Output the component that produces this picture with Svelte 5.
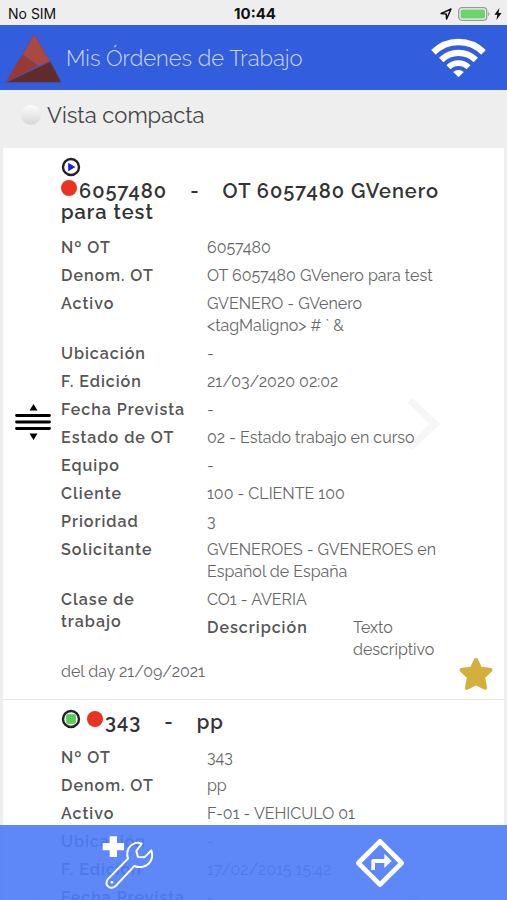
<script lang="ts">
	type Row = { label: string; value: string; nested?: { label: string; value: string } };
	type Order = {
		id: string;
		title: string;
		state: 'running' | 'stopped';
		rows: Row[];
		note: string;
		starred: boolean;
	};

	let compact = $state(false);

	const orders: Order[] = [
		{
			id: '6057480',
			title: 'OT 6057480 GVenero para test',
			state: 'running',
			rows: [
				{ label: 'Nº OT', value: '6057480' },
				{ label: 'Denom. OT', value: 'OT 6057480 GVenero para test' },
				{ label: 'Activo', value: 'GVENERO - GVenero <tagMaligno> # ` &' },
				{ label: 'Ubicación', value: '-' },
				{ label: 'F. Edición', value: '21/03/2020 02:02' },
				{ label: 'Fecha Prevista', value: '-' },
				{ label: 'Estado de OT', value: '02 - Estado trabajo en curso' },
				{ label: 'Equipo', value: '-' },
				{ label: 'Cliente', value: '100 - CLIENTE 100' },
				{ label: 'Prioridad', value: '3' },
				{ label: 'Solicitante', value: 'GVENEROES - GVENEROES en Español de España' },
				{
					label: 'Clase de trabajo',
					value: 'CO1 - AVERIA',
					nested: { label: 'Descripción', value: 'Texto descriptivo' }
				}
			],
			note: 'del day 21/09/2021',
			starred: true
		},
		{
			id: '343',
			title: 'pp',
			state: 'stopped',
			rows: [
				{ label: 'Nº OT', value: '343' },
				{ label: 'Denom. OT', value: 'pp' },
				{ label: 'Activo', value: 'F-01 - VEHICULO 01' },
				{ label: 'Ubicación', value: '-' },
				{ label: 'F. Edición', value: '17/02/2015 15:42' },
				{ label: 'Fecha Prevista', value: '-' },
				{ label: 'Estado de OT', value: '-' },
				{ label: 'Equipo', value: '-' },
				{ label: 'Cliente', value: '-' },
				{ label: 'Prioridad', value: '-' },
				{ label: 'Solicitante', value: '-' },
				{ label: 'Clase de trabajo', value: '-' }
			],
			note: '',
			starred: false
		}
	];
</script>

<div class="app">
	<div class="status-bar">
		<span>No SIM</span>
		<span class="clock">10:44</span>
		<span class="status-icons">
			<svg width="12" height="12" viewBox="0 0 12 12" aria-hidden="true">
				<path d="M1 5.6 11 1 6.6 11 6.2 5.9z" fill="none" stroke="#111" stroke-width="1.5" stroke-linejoin="round" />
			</svg>
			<svg width="32" height="14" viewBox="0 0 32 14" aria-hidden="true">
				<rect x="0.7" y="0.7" width="28" height="12.6" rx="3.2" fill="#f4f4f4" stroke="#999" stroke-width="1.3" />
				<rect x="2.5" y="2.4" width="24.5" height="9.2" rx="1.6" fill="#6fd36b" />
				<path d="M30.2 4.8c1.6.8 1.6 3.6 0 4.4z" fill="#999" />
			</svg>
			<svg width="8" height="12" viewBox="0 0 8 12" aria-hidden="true">
				<path d="M5.4 0 .4 6.8h2.9L2.4 12l5.2-7.1H4.5z" fill="#111" />
			</svg>
		</span>
	</div>

	<header class="header">
		<svg class="logo" width="57" height="50" viewBox="13 92 172 151" aria-hidden="true">
			<path d="M101 95 66 158 112 191 150 178z" fill="#aa4941" />
			<path d="M66 158 112 191 15 241z" fill="#983a31" />
			<path d="M15 241 150 178 183 241z" fill="#602b2b" />
			<path d="M66 158 112 191M15 241 150 178" fill="none" stroke="#5c4a86" stroke-width="3" />
			<path d="M101 95 15 241H183z" fill="none" stroke="#6a4680" stroke-width="1.5" />
		</svg>
		<h1>Mis Órdenes de Trabajo</h1>
		<svg class="wifi" width="55" height="40" viewBox="541 111 164 121" aria-hidden="true">
			<g fill="none" stroke="#fff">
				<path d="M547.3 154.3a107 107 0 0 1 151.4 0" stroke-width="20" />
				<path d="M570.7 177.7a74 74 0 0 1 104.6 0" stroke-width="19" />
				<path d="M592.6 199.6a43 43 0 0 1 60.8 0" stroke-width="17" />
			</g>
			<path d="M623 230l-16-16a23 23 0 0 1 32 0z" fill="#fff" />
		</svg>
	</header>

	<label class="view-toggle">
		<input type="checkbox" bind:checked={compact} />
		<span>Vista compacta</span>
	</label>

	<main class="orders">
		{#each orders as order (order.id)}
			<article class="order">
				<svg class="chevron" width="34" height="56" viewBox="0 0 34 56" aria-hidden="true">
					<path d="M4 4 29 28 4 52" fill="none" stroke="#f6f6f6" stroke-width="7" />
				</svg>

				<button class="handle" aria-label="Mover">
					<svg width="36" height="36" viewBox="0 0 36 36" aria-hidden="true">
						<path d="M18.500 0 22.500 6.500h-8zM18.500 36l-4-6.500h8z" />
						<path d="M1.500 11.500h33M1.500 18h33M1.500 24.500h33" stroke="#000" stroke-width="2.800" stroke-linecap="round" />
					</svg>
				</button>

				<div class="body">
					<h2 class="title">
						<svg class="state" width="20" height="20" viewBox="0 0 20 20" aria-hidden="true">
							<circle cx="10" cy="10" r="8" fill="#fff" stroke="#222" stroke-width="2.400" />
							{#if order.state === 'running'}
								<path d="M7.200 5.800v8.400L14.400 10z" fill="#1c1cf0" />
							{:else}
								<rect x="5.500" y="5.500" width="9" height="9" rx="1" fill="#52d24f" stroke="#82c481" />
							{/if}
						</svg>
						<span class="title-text"><span class="dot"></span>{order.id}<span class="dash">-</span>{order.title}</span>
					</h2>

					{#if !compact}
						<dl class="rows">
							{#each order.rows as row}
								<dt>{row.label}</dt>
								<dd>
									{row.value}
									{#if row.nested}
										<dl class="rows rows--nested">
											<dt>{row.nested.label}</dt>
											<dd>{row.nested.value}</dd>
										</dl>
									{/if}
								</dd>
							{/each}
						</dl>
					{/if}

					<p class="note">{order.note}</p>
				</div>

				{#if order.starred}
					<svg class="star" width="36" height="34" viewBox="0 0 36 34" aria-hidden="true">
						<path
							d="M18 3 22.200 11.600 32.500 13.100 25.100 20.100 27 30.800 18 26.200 9 30.800 10.900 20.100 3.500 13.100 13.800 11.600z"
							fill="#d3b03c"
							stroke="#d3b03c"
							stroke-width="4"
							stroke-linejoin="round"
						/>
					</svg>
				{/if}
			</article>
		{/each}
	</main>

	<footer class="actions">
		<button aria-label="Nueva orden">
			<svg width="56" height="56" viewBox="300 286 168 168" aria-hidden="true">
				<path d="M332 290h22v20h21v22h-21v20h-22v-20h-21v-22h21z" fill="#fff" />
				<path
					d="M428 312C408 304 388 318 385 338 384 345 385 351 387 357L328 417C320 425 321 435 327 440 333 446 344 446 351 438L406 379C422 386 445 382 455 364 460 354 461 343 457 332L436 353 417 352 412 334z"
					fill="none"
					stroke="#fff"
					stroke-width="6"
					stroke-linejoin="round"
				/>
				<circle cx="339" cy="428" r="4" fill="#fff" />
			</svg>
		</button>
		<button aria-label="Ruta">
			<svg width="50" height="50" viewBox="317 292 150 150" aria-hidden="true">
				<path d="M392 302 457 367 392 432 327 367z" fill="none" stroke="#fff" stroke-width="14" stroke-linejoin="round" />
				<path d="M366 388v-27q0-6 6-6h33v-16l22 22-22 21v-15h-28v21z" fill="#fff" />
			</svg>
		</button>
	</footer>
</div>

<style>
	:global(body) {
		margin: 0;
		background: #eee;
	}

	.app {
		display: flex;
		flex-direction: column;
		height: 100vh;
		overflow: hidden;
		background: #eee;
		color: #666;
		font-family: Raleway, Lato, sans-serif;
		font-size: 16px;
		line-height: 22px;
	}

	.status-bar {
		flex: none;
		display: grid;
		grid-template-columns: 1fr auto 1fr;
		align-items: center;
		height: 25px;
		padding: 2px 5px 0 8px;
		box-sizing: border-box;
		color: #111;
		font-family: Inter, sans-serif;
		font-size: 14px;
	}

	.clock {
		font-size: 15px;
		font-weight: 700;
	}

	.status-icons {
		display: flex;
		justify-content: flex-end;
		align-items: center;
		gap: 4px;
	}

	.status-icons svg:first-child {
		margin-right: 2px;
	}

	.header {
		flex: none;
		display: flex;
		align-items: center;
		gap: 4px;
		height: 65px;
		padding: 0 21px 0 5px;
		background: #325ddd;
	}

	.logo,
	.wifi {
		flex: none;
	}

	h1 {
		flex: 1;
		margin: 0;
		color: #cbd8fa;
		font-size: 22px;
		font-weight: 300;
		line-height: 30px;
	}

	.view-toggle {
		flex: none;
		display: flex;
		align-items: center;
		gap: 6px;
		height: 50px;
		padding: 0 21px 8px;
		color: #444;
		font-size: 22px;
	}

	.view-toggle input {
		appearance: none;
		width: 20px;
		height: 20px;
		margin: 0;
		border-radius: 50%;
		background: linear-gradient(#fcfcfc, #d6d6d6);
	}

	.view-toggle input:checked {
		background: linear-gradient(#5e88f7, #325ddd);
	}

	.orders {
		flex: 1;
		min-height: 0;
		margin: 0 3px;
		overflow-y: auto;
		scrollbar-width: none;
		background: #fff;
	}

	.order {
		position: relative;
		display: flex;
		align-items: center;
		padding: 12px 56px 16px 12px;
		border-bottom: 1px solid #e6e6e6;
	}

	.handle {
		flex: none;
		display: flex;
		padding: 0;
		border: 0;
		background: none;
	}

	.body {
		position: relative;
		flex: 1;
		min-width: 0;
		margin-left: 10px;
	}

	.title {
		margin: 0 0 14px;
		color: #333;
		font-size: 20px;
		font-weight: 600;
		line-height: 21px;
		letter-spacing: 1px;
	}

	.title-text {
		display: inline-block;
		vertical-align: top;
	}

	.state {
		display: inline-block;
		vertical-align: top;
		margin-top: -3px;
	}

	.dot {
		display: inline-block;
		width: 16px;
		height: 16px;
		margin: -2px 2px 0 0;
		border-radius: 50%;
		background: #e93323;
		vertical-align: 2px;
	}

	.dash {
		margin: 0 23px;
	}

	.rows {
		display: grid;
		grid-template-columns: 132px 1fr;
		gap: 6px 14px;
		margin: 0;
	}

	.rows--nested {
		margin-top: 6px;
	}

	dt {
		color: #555;
		font-weight: 600;
		letter-spacing: 1px;
	}

	dd {
		min-width: 0;
		margin: 0;
	}

	.note {
		min-height: 22px;
		margin: 0;
	}

	.chevron {
		position: absolute;
		top: 50%;
		right: 64px;
		margin-top: -28px;
	}

	.star {
		position: absolute;
		right: 10px;
		bottom: 8px;
	}

	.actions {
		position: fixed;
		right: 0;
		bottom: 0;
		left: 0;
		display: flex;
		height: 75px;
		background: rgba(76, 123, 246, 0.9);
	}

	.actions button {
		flex: 1;
		display: flex;
		align-items: center;
		justify-content: center;
		padding: 0;
		border: 0;
		background: none;
	}
</style>
